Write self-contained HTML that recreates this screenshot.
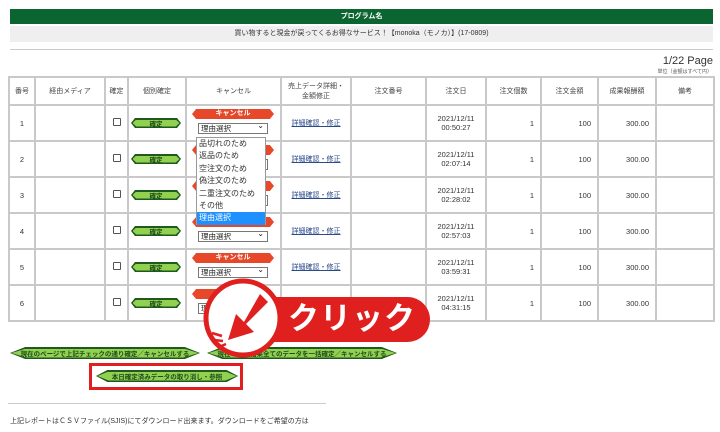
<!DOCTYPE html>
<html><head><meta charset="utf-8"><style>
*{margin:0;padding:0;box-sizing:border-box}
body{width:720px;height:432px;background:#fff;font-family:"Liberation Sans","Noto Sans CJK JP",sans-serif;position:relative;overflow:hidden;color:#333}
.abs{position:absolute}
table{position:absolute;left:8px;top:76px;border-collapse:collapse;table-layout:fixed;font-size:7.5px}
td{border:2px solid #c9c9c9;text-align:center;vertical-align:middle;padding:0;position:relative}
tr.h td{height:28px;font-size:7px;color:#444}
tr.r td{height:36px}
.num{text-align:right!important;padding-right:6px!important}
.hex{position:absolute;display:block;background:#1e5a1e;clip-path:polygon(0 50%,8% 0,92% 0,100% 50%,92% 100%,8% 100%)}
.hex i{position:absolute;left:1.5px;right:1.5px;top:1.5px;bottom:1.5px;background:#92d050;clip-path:polygon(0 50%,8% 0,92% 0,100% 50%,92% 100%,8% 100%);font-style:normal;font-weight:bold;color:#1e4a1e;font-size:6.5px;display:flex;align-items:center;justify-content:center}
.can{position:absolute;left:5px;top:3px;width:82px;height:10px;background:#e8482a;clip-path:polygon(0 50%,5% 0,95% 0,100% 50%,95% 100%,5% 100%);color:#fff;font-weight:bold;font-size:7px;line-height:10px}
.sel{position:absolute;left:11px;top:17px;width:70px;height:11px;border:1px solid #777;background:#fff;font-size:7.5px;line-height:9px;text-align:left;padding-left:2px;color:#222}
.sel:after{content:"⌄";position:absolute;right:3px;top:-3px;font-size:8px}
.lk{color:#2a4a8a;text-decoration:underline;font-size:7px}
.cb{display:inline-block;width:8px;height:8px;border:1px solid #555;border-radius:1px}
</style></head><body>
<div class="abs" style="left:10px;top:9px;width:703px;height:15px;background:#0b6530;color:#fff;font-size:7px;font-weight:bold;text-align:center;line-height:15px">プログラム名</div>
<div class="abs" style="left:10px;top:26px;width:703px;height:16px;background:#efefef;font-size:7px;text-align:center;line-height:16px;color:#333">買い物すると現金が戻ってくるお得なサービス！【monoka（モノカ）】(17-0809)</div>
<div class="abs" style="left:10px;top:49px;width:703px;height:1px;background:#ccc"></div>
<div class="abs" style="right:7px;top:55px;font-size:11px;color:#333">1/22 Page</div>
<div class="abs" style="right:8px;top:68px;font-size:5px;color:#555">単位（金額はすべて円）</div>
<table>
<colgroup><col style="width:26px"><col style="width:70px"><col style="width:23px"><col style="width:58px"><col style="width:95px"><col style="width:70px"><col style="width:75px"><col style="width:60px"><col style="width:55px"><col style="width:57px"><col style="width:58px"><col style="width:58px"></colgroup>
<tr class="h"><td>番号</td><td>経由メディア</td><td>確定</td><td>個別確定</td><td>キャンセル</td><td>売上データ詳細・<br>金額修正</td><td>注文番号</td><td>注文日</td><td>注文個数</td><td>注文金額</td><td>成果報酬額</td><td>備考</td></tr>
<tr class="r"><td>1</td><td></td><td><span class="cb"></span></td><td><b class="hex" style="left:2px;top:12px;width:50px;height:10px"><i>確定</i></b></td><td><span class="can">キャンセル</span><span class="sel">理由選択</span></td><td><span class="lk">詳細確認・修正</span></td><td></td><td>2021/12/11<br>00:50:27</td><td class="num">1</td><td class="num">100</td><td class="num">300.00</td><td></td></tr>
<tr class="r"><td>2</td><td></td><td><span class="cb"></span></td><td><b class="hex" style="left:2px;top:12px;width:50px;height:10px"><i>確定</i></b></td><td><span class="can">キャンセル</span><span class="sel">理由選択</span></td><td><span class="lk">詳細確認・修正</span></td><td></td><td>2021/12/11<br>02:07:14</td><td class="num">1</td><td class="num">100</td><td class="num">300.00</td><td></td></tr>
<tr class="r"><td>3</td><td></td><td><span class="cb"></span></td><td><b class="hex" style="left:2px;top:12px;width:50px;height:10px"><i>確定</i></b></td><td><span class="can">キャンセル</span><span class="sel">理由選択</span></td><td><span class="lk">詳細確認・修正</span></td><td></td><td>2021/12/11<br>02:28:02</td><td class="num">1</td><td class="num">100</td><td class="num">300.00</td><td></td></tr>
<tr class="r"><td>4</td><td></td><td><span class="cb"></span></td><td><b class="hex" style="left:2px;top:12px;width:50px;height:10px"><i>確定</i></b></td><td><span class="can">キャンセル</span><span class="sel">理由選択</span></td><td><span class="lk">詳細確認・修正</span></td><td></td><td>2021/12/11<br>02:57:03</td><td class="num">1</td><td class="num">100</td><td class="num">300.00</td><td></td></tr>
<tr class="r"><td>5</td><td></td><td><span class="cb"></span></td><td><b class="hex" style="left:2px;top:12px;width:50px;height:10px"><i>確定</i></b></td><td><span class="can">キャンセル</span><span class="sel">理由選択</span></td><td><span class="lk">詳細確認・修正</span></td><td></td><td>2021/12/11<br>03:59:31</td><td class="num">1</td><td class="num">100</td><td class="num">300.00</td><td></td></tr>
<tr class="r"><td>6</td><td></td><td><span class="cb"></span></td><td><b class="hex" style="left:2px;top:12px;width:50px;height:10px"><i>確定</i></b></td><td><span class="can">キャンセル</span><span class="sel">理由選択</span></td><td><span class="lk">詳細確認・修正</span></td><td></td><td>2021/12/11<br>04:31:15</td><td class="num">1</td><td class="num">100</td><td class="num">300.00</td><td></td></tr>
</table>
<div class="abs" style="left:196px;top:137px;width:70px;height:88px;background:#fff;border:1px solid #999;font-size:8px;line-height:12.4px;color:#333;padding-left:2px">品切れのため<br>返品のため<br>空注文のため<br>偽注文のため<br>二重注文のため<br>その他<div style="background:#1e90ff;color:#fff;margin-left:-2px;padding-left:2px">理由選択</div></div>
<b class="hex" style="left:10px;top:347px;width:190px;height:12px"><i>現在のページで上記チェックの通り確定／キャンセルする</i></b>
<b class="hex" style="left:207px;top:347px;width:190px;height:12px"><i>現在の検索結果全てのデータを一括確定／キャンセルする</i></b>
<b class="hex" style="left:96px;top:370px;width:142px;height:12px"><i>本日確定済みデータの取り消し・参照</i></b>
<div class="abs" style="left:89px;top:363px;width:154px;height:27px;border:3px solid #e0201e"></div>
<div class="abs" style="left:8px;top:403px;width:318px;height:1px;background:#ccc"></div>
<div class="abs" style="left:10px;top:416px;font-size:7px;color:#333">上記レポートはＣＳＶファイル(SJIS)にてダウンロード出来ます。ダウンロードをご希望の方は</div>
<div class="abs" style="left:268px;top:297px;width:162px;height:45px;background:#e0201e;border-radius:0 23px 23px 0"></div>
<div class="abs" style="left:288px;top:298px;font-size:31px;font-weight:bold;color:#fff;letter-spacing:1px;line-height:42px">クリック</div>
<svg class="abs" style="left:200px;top:276px" width="86" height="86" viewBox="0 0 86 86">
<circle cx="43" cy="42" r="37" fill="#fff" stroke="#e0201e" stroke-width="5"/>
<polygon points="60,18 68,26 46,48 54,56 28,64 36,38 44,46" fill="#e0201e"/>
<path d="M12 57 L22 60 M14 64 L23 65 M19 71 L26 68" stroke="#e0201e" stroke-width="2.5"/>
</svg>
</body></html>
